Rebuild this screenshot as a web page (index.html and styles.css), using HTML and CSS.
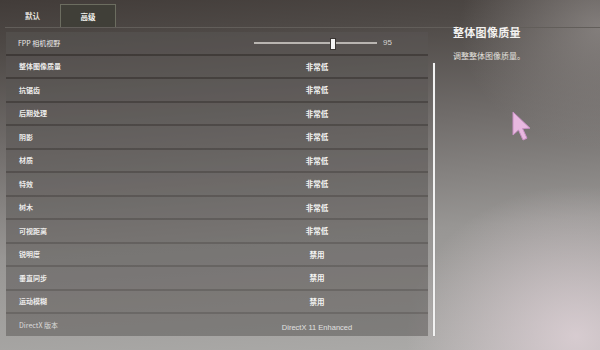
FILE: index.html
```html
<!DOCTYPE html>
<html lang="zh">
<head>
<meta charset="utf-8">
<title>设置 - 高级</title>
<link rel="stylesheet" href="styles.css">
</head>
<body>
<div class="screen">
  <div class="tabs">
    <div class="tab">默认</div>
    <div class="tab active">高级</div>
  </div>
  <div class="main">
    <div class="list">
      <div class="row slider-row">
        <span class="label">FPP 相机视野</span>
        <div class="slider"><div class="track"></div><div class="knob"></div></div>
        <span class="num">95</span>
      </div>
      <div class="row"><span class="label">整体图像质量</span><span class="value">非常低</span></div>
      <div class="row"><span class="label">抗锯齿</span><span class="value">非常低</span></div>
      <div class="row"><span class="label">后期处理</span><span class="value">非常低</span></div>
      <div class="row"><span class="label">阴影</span><span class="value">非常低</span></div>
      <div class="row"><span class="label">材质</span><span class="value">非常低</span></div>
      <div class="row"><span class="label">特效</span><span class="value">非常低</span></div>
      <div class="row"><span class="label">树木</span><span class="value">非常低</span></div>
      <div class="row"><span class="label">可视距离</span><span class="value">非常低</span></div>
      <div class="row"><span class="label">锐明度</span><span class="value">禁用</span></div>
      <div class="row"><span class="label">垂直同步</span><span class="value">禁用</span></div>
      <div class="row"><span class="label">运动模糊</span><span class="value">禁用</span></div>
      <div class="row dim"><span class="label">DirectX 版本</span><span class="value">DirectX 11 Enhanced</span></div>
    </div>
    <div class="scroll"><div class="thumb"></div></div>
    <div class="info">
      <div class="info-title">整体图像质量</div>
      <div class="info-desc">调整整体图像质量。</div>
    </div>
  </div>
  <svg class="cursor" width="22" height="32" viewBox="0 0 22 32">
    <path d="M1 1 L1 24 L6.5 19 L11 29 L15 27.2 L10.6 17.6 L18 17.2 Z" fill="#e8b8e0" stroke="#c890c4" stroke-width="1" stroke-linejoin="round"/>
  </svg>
</div>
</body>
</html>
```
FILE: styles.css
```css
html, body {
  margin: 0;
  padding: 0;
}
body {
  width: 600px;
  height: 350px;
  overflow: hidden;
  font-family: "Noto Sans CJK SC", "Liberation Sans", sans-serif;
}
.screen {
  position: relative;
  width: 600px;
  height: 350px;
  box-sizing: border-box;
  padding: 4px 0 0 5px;
  display: flex;
  flex-direction: column;
  background:
    radial-gradient(ellipse 170px 150px at 96% 96%, rgba(226, 212, 218, 0.8) 0%, rgba(210, 200, 202, 0) 100%),
    radial-gradient(ellipse 140px 120px at 100% 8%, rgba(150, 145, 143, 0.7) 0%, rgba(150, 145, 143, 0) 100%),
    linear-gradient(176deg, #423c39 0%, #4f4a47 13%, #716d6b 38%, #989694 66%, #acaba9 100%);
}
.tabs {
  display: flex;
  height: 23px;
  border-bottom: 1px solid #625e5a;
}
.tab {
  width: 55px;
  display: flex;
  align-items: center;
  justify-content: center;
  font-size: 7.5px;
  color: #e4e2df;
  font-weight: 700;
}
.tab.active {
  width: 56px;
  box-sizing: border-box;
  border: 1px solid #6c6d60;
  border-bottom: none;
  background: #403f38;
  color: #f2f2ee;
}
.main {
  display: flex;
  margin-top: 4px;
  flex: 1;
}
.list {
  width: 422px;
  margin-left: 1px;
  display: flex;
  flex-direction: column;
  gap: 2px;
  align-self: flex-start;
  background: rgba(40, 36, 34, 0.45);
}
.row {
  height: 21.5px;
  display: grid;
  grid-template-columns: 1fr 222px;
  align-items: center;
  background: rgba(255, 255, 255, 0.12);
  font-size: 7.5px;
}
.label {
  padding-left: 13px;
  font-size: 7px;
  font-weight: 700;
  color: #ecebea;
}
.value {
  text-align: center;
  color: #f4f4f2;
  font-weight: 700;
}
.row.dim .value {
  font-family: "Liberation Sans", "Noto Sans CJK SC", sans-serif;
  font-weight: 400;
  color: #e0e0e0;
  padding-top: 5px;
}
.row.dim .label {
  color: #dcdcdc;
  font-weight: 400;
}
.slider-row {
  display: flex;
  align-items: center;
}
.slider-row .label {
  flex: 1;
  padding-left: 12px;
  font-weight: 400;
}
.slider {
  position: relative;
  width: 123px;
  height: 12px;
  display: flex;
  align-items: center;
}
.track {
  width: 100%;
  height: 1.5px;
  background: #b9b5b1;
}
.knob {
  position: absolute;
  left: 76px;
  top: 1px;
  width: 4px;
  height: 10px;
  background: #f4f4f4;
  border: 0.5px solid #3a3633;
}
.num {
  margin-left: 6px;
  width: 45px;
  color: #d6d4d2;
  font-family: "Liberation Sans", sans-serif;
  font-size: 8px;
}
.scroll {
  width: 12px;
  display: flex;
  justify-content: center;
  padding-top: 31px;
}
.thumb {
  width: 2.5px;
  height: 273px;
  background: #f2f2f2;
  box-shadow: 0 0 1px #888;
}
.info {
  padding-left: 13px;
  margin-top: -7px;
}
.info-title {
  font-size: 11px;
  font-weight: 700;
  color: #f4f2f0;
  line-height: 14px;
  letter-spacing: 0.3px;
}
.info-desc {
  margin-top: 11px;
  font-size: 8px;
  color: #e2e0de;
}
.cursor {
  position: absolute;
  left: 512px;
  top: 111px;
}
```
